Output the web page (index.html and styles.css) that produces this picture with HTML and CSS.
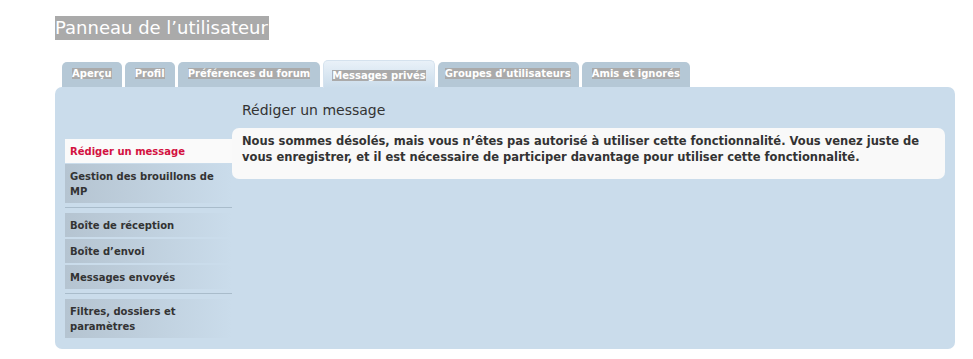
FILE: index.html
```html
<!DOCTYPE html>
<html>
    <head>
        <meta http-equiv="content-type" content="text/html; charset=utf-8" />
        <title>Panneau de l’utilisateur</title>
        <link rel="stylesheet" href="styles.css">
    </head>
    <body>
        <div class="page">
            <h2 class="title"><span>Panneau de l’utilisateur</span></h2>
            <ul class="tabs">
                <li class="tab"><span>Aperçu</span></li>
                <li class="tab"><span>Profil</span></li>
                <li class="tab"><span>Préférences du forum</span></li>
                <li class="tab active"><span>Messages privés</span></li>
                <li class="tab narrow"><span>Groupes d’utilisateurs</span></li>
                <li class="tab"><span>Amis et ignorés</span></li>
            </ul>
            <div class="panel">
                <div class="menu">
                    <ul class="menu-group">
                        <li class="item current">Rédiger un message</li>
                        <li class="item">Gestion des brouillons de MP</li>
                    </ul>
                    <ul class="menu-group">
                        <li class="item">Boîte de réception</li>
                        <li class="item">Boîte d’envoi</li>
                        <li class="item">Messages envoyés</li>
                    </ul>
                    <ul class="menu-group">
                        <li class="item">Filtres, dossiers et paramètres</li>
                    </ul>
                </div>
                <div class="main">
                    <h3 class="main-title">Rédiger un message</h3>
                    <div class="notice">
                        Nous sommes désolés, mais vous n’êtes pas autorisé à utiliser cette fonctionnalité. Vous venez juste de vous enregistrer, et il est nécessaire de participer davantage pour utiliser cette fonctionnalité.
                    </div>
                </div>
            </div>
        </div>
    </body>
</html>
```

FILE: styles.css
```css
* {
    padding: 0;
    margin: 0;
    box-sizing: border-box;
}

body {
    background: #fff;
    font-family: "DejaVu Sans", Verdana, sans-serif;
    color: #333;
}

.page {
    padding: 16px 18px 0 55px;
}

.title {
    font-size: 18px;
    font-weight: normal;
    line-height: 24px;
    height: 24px;
}

.title span {
    background: #aaa;
    color: #fff;
    padding: 1px 1px 2px 0;
}

.tabs {
    list-style: none;
    display: flex;
    gap: 3px;
    margin-top: 20px;
    padding-left: 7px;
    align-items: flex-end;
}

.tab {
    background: #b5c8d6;
    border-radius: 5px 5px 0 0;
    height: 25px;
    padding: 6px 10px 0;
    font-size: 10px;
    font-weight: bold;
    line-height: 12px;
}

.tab span {
    background: #aaa;
    color: #fff;
}

.tab.narrow {
    padding: 6px 8px 0 7px;
}

.tab.active {
    background: linear-gradient(#e9f1f8, #cadceb);
    height: 28px;
    padding: 9px 8px 0;
    margin-bottom: -1px;
    border: 1px solid #d5e2ee;
    border-bottom: none;
}

.panel {
    background: #cadceb;
    border-radius: 7px;
    height: 262px;
    display: flex;
    padding: 13px 10px 0 10px;
}

.menu {
    width: 167px;
    flex-shrink: 0;
    padding-top: 39px;
}

.menu-group {
    list-style: none;
    border-bottom: 1px solid #a9bccb;
    padding-bottom: 2px;
    margin-bottom: 5px;
}

.menu-group:last-child {
    border-bottom: none;
}

.item {
    font-size: 10px;
    font-weight: bold;
    line-height: 15px;
    padding: 5px 5px 4px;
    margin-bottom: 2px;
    color: #333;
    background: linear-gradient(90deg, #b5c4d1, #cadceb);
}

.current {
    background: #fafafa;
    color: #d31141;
    margin-bottom: 1px;
}

.main {
    flex: 1;
}

.main-title {
    font-size: 14px;
    font-weight: normal;
    line-height: 20px;
    padding-left: 10px;
    margin-bottom: 8px;
    color: #333;
}

.notice {
    background: #f9f9f9;
    border-radius: 7px;
    padding: 5px 10px 14px;
    font-size: 11.5px;
    font-weight: bold;
    line-height: 16px;
    color: #333;
}
```
